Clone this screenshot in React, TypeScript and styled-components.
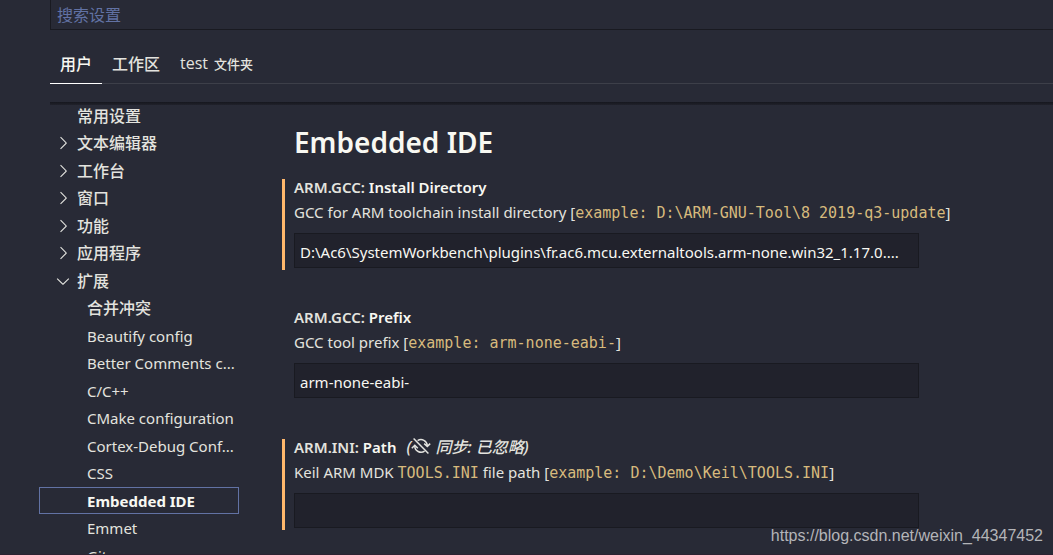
import React, { useState } from "react";
import styled, { createGlobalStyle, css } from "styled-components";
import { VscChevronDown, VscChevronRight } from "react-icons/vsc";

const colors = {
  background: "#282a36",
  inputBackground: "#21222c",
  border: "#191a21",
  divider: "#3d3f49",
  muted: "#6272a4",
  text: "#e3e3df",
  strong: "#f8f8f2",
  modified: "#ffb86c",
  code: "#d7ba7d",
};

const GlobalStyle = createGlobalStyle`
  * {
    box-sizing: border-box;
  }
  body {
    margin: 0;
    overflow: hidden;
    background: ${colors.background};
  }
  button, input {
    font: inherit;
  }
`;

const Page = styled.div`
  position: relative;
  display: flex;
  flex-direction: column;
  height: 100vh;
  overflow: hidden;
  border-bottom: 1px solid #2c2232;
  background: ${colors.background};
  color: ${colors.text};
  font-family: "Noto Sans", "Noto Sans CJK SC", sans-serif;
  font-size: 15px;
`;

const Header = styled.header`
  flex: none;
  padding-left: 50px;
`;

const SearchInput = styled.input`
  display: block;
  width: 100%;
  height: 30px;
  padding: 0 6px;
  border: solid ${colors.border};
  border-width: 0 0 1px 1px;
  outline: none;
  background: ${colors.background};
  color: ${colors.strong};
  font-size: 16px;

  &::placeholder {
    color: ${colors.muted};
    opacity: 1;
  }
`;

const Tabs = styled.div`
  display: flex;
  height: 40px;
  margin-top: 14px;
  border-bottom: 1px solid ${colors.divider};
`;

const Tab = styled.button<{ $active?: boolean }>`
  display: flex;
  align-items: center;
  gap: 6px;
  height: 40px;
  padding: 0 10px 1px;
  border: 0;
  border-bottom: 1px solid ${(p) => (p.$active ? "#ffffff" : "transparent")};
  background: none;
  color: ${(p) => (p.$active ? colors.strong : colors.text)};
  font-size: 16px;
  font-weight: 500;
  white-space: nowrap;
`;

const FolderName = styled.span`
  font-family: "Open Sans", sans-serif;
  font-weight: 400;
`;

const FolderLabel = styled.small`
  font-size: 13px;
`;

const Body = styled.div`
  display: flex;
  flex: 1;
  gap: 43px;
  min-height: 0;
  margin-top: 18px;
  padding-left: 39px;
`;

const ScrollShadow = styled.div`
  position: absolute;
  top: 102px;
  right: 0;
  left: 50px;
  height: 3px;
  background: linear-gradient(#16171e, #20212b);
`;

const Tree = styled.ul`
  display: grid;
  flex: none;
  grid-auto-rows: 27px 28px;
  width: 200px;
  margin: 0;
  padding: 0;
  list-style: none;
`;

const TreeItem = styled.button<{ $child?: boolean; $selected?: boolean }>`
  display: flex;
  align-items: center;
  width: 100%;
  height: 27px;
  padding: 0 0 0 ${(p) => (p.$child ? 47 : 13)}px;
  border: 1px solid transparent;
  background: none;
  color: inherit;
  white-space: nowrap;

  ${(p) =>
    p.$selected &&
    css`
      border-color: ${colors.muted};
      color: ${colors.strong};
      font-weight: 700;
    `}
`;

const Twistie = styled.span`
  display: flex;
  flex: none;
  width: 24px;
  font-size: 20px;
`;

const TreeLabel = styled.span<{ $cjk: boolean }>`
  ${(p) =>
    p.$cjk &&
    css`
      padding-bottom: 2px;
      font-size: 16px;
      font-weight: 500;
    `}
`;

const Settings = styled.main`
  flex: 1;
  min-width: 0;
`;

const Heading = styled.h1`
  margin: 20px 0 17px 12px;
  color: ${colors.strong};
  font-size: 28px;
  font-weight: 600;
  line-height: 40px;
`;

const SettingItem = styled.section<{ $modified?: boolean }>`
  margin-bottom: 39px;
  padding: 0 12px 2px 9px;
  border-left: 3px solid ${(p) => (p.$modified ? colors.modified : "transparent")};
`;

const SettingTitle = styled.h2`
  display: flex;
  align-items: center;
  gap: 10px;
  height: 17px;
  margin: 0;
  font-size: 15px;
  font-weight: 600;
  line-height: 17px;
  white-space: nowrap;
`;

const SettingName = styled.label`
  color: ${colors.strong};
`;

const SettingCategory = styled.span`
  color: ${colors.text};
`;

const SyncNote = styled.em`
  display: flex;
  align-items: center;
  font-size: 16px;
  font-weight: 500;
`;

const SyncSvg = styled.svg`
  width: 20px;
  height: 20px;
  margin-right: 4px;
  margin-bottom: 4px;
`;

const Description = styled.p`
  height: 24px;
  margin: 4px 0 9px;
  line-height: 24px;
  white-space: nowrap;
`;

const Code = styled.code`
  color: ${colors.code};
  font-family: "DejaVu Sans Mono", monospace;
  font-size: 15px;
  line-height: 1;
`;

const TextInput = styled.input`
  display: block;
  width: 100%;
  max-width: 625px;
  height: 35px;
  padding: 3px 5px 0;
  border: 1px solid ${colors.border};
  outline: none;
  background: ${colors.inputBackground};
  color: ${colors.strong};
  text-overflow: ellipsis;
`;

const Watermark = styled.div`
  position: absolute;
  right: 10px;
  bottom: 9px;
  color: #b4b5b9;
  font-family: "Liberation Sans", sans-serif;
  font-size: 16px;
  line-height: 18px;
`;

type Node = { label: string; state?: "open" | "closed"; child?: boolean };

const nodes: Node[] = [
  { label: "常用设置" },
  { label: "文本编辑器", state: "closed" },
  { label: "工作台", state: "closed" },
  { label: "窗口", state: "closed" },
  { label: "功能", state: "closed" },
  { label: "应用程序", state: "closed" },
  { label: "扩展", state: "open" },
  { label: "合并冲突", child: true },
  { label: "Beautify config", child: true },
  { label: "Better Comments c...", child: true },
  { label: "C/C++", child: true },
  { label: "CMake configuration", child: true },
  { label: "Cortex-Debug Conf...", child: true },
  { label: "CSS", child: true },
  { label: "Embedded IDE", child: true },
  { label: "Emmet", child: true },
  { label: "Git", child: true },
];

/* Two circling arrows crossed by a diagonal stroke. */
function SyncIgnoredIcon() {
  return (
    <SyncSvg viewBox="0 0 20 20" fill="none" stroke="currentColor" strokeWidth="1.5" aria-hidden="true">
      <path d="M6.6 4.6A6.3 6.3 0 0 1 16.3 9.6" />
      <path d="M13.2 7.6 16.3 10.4 19.2 7.6" />
      <path d="M13.6 15.2A6.3 6.3 0 0 1 3.8 10" />
      <path d="M0.8 12.2 3.8 9.2 6.8 12.2" />
      <path d="M2.6 2.4 17.4 17.6" />
    </SyncSvg>
  );
}

type SettingProps = {
  id: string;
  category: string;
  name: string;
  value: string;
  modified?: boolean;
  syncIgnored?: boolean;
  children: React.ReactNode;
};

function Setting({ id, category, name, value, modified, syncIgnored, children }: SettingProps) {
  return (
    <SettingItem $modified={modified}>
      <SettingTitle>
        <SettingName htmlFor={id}>
          <SettingCategory>{category}: </SettingCategory>
          {name}
        </SettingName>
        {syncIgnored && (
          <SyncNote>
            (<SyncIgnoredIcon />
            同步: 已忽略)
          </SyncNote>
        )}
      </SettingTitle>
      <Description>{children}</Description>
      <TextInput id={id} type="text" defaultValue={value} />
    </SettingItem>
  );
}

export default function App() {
  const [selected, setSelected] = useState("Embedded IDE");

  return (
    <Page>
      <GlobalStyle />
      <Header>
        <SearchInput type="text" placeholder="搜索设置" aria-label="搜索设置" />
        <Tabs role="tablist">
          <Tab role="tab" aria-selected $active>
            用户
          </Tab>
          <Tab role="tab">工作区</Tab>
          <Tab role="tab">
            <FolderName>test</FolderName>
            <FolderLabel>文件夹</FolderLabel>
          </Tab>
        </Tabs>
      </Header>
      <Body>
        <Tree>
          {nodes.map(({ label, state, child }) => (
            <li key={label}>
              <TreeItem $child={child} $selected={label === selected} onClick={() => setSelected(label)}>
                {!child && (
                  <Twistie>
                    {state === "closed" && <VscChevronRight />}
                    {state === "open" && <VscChevronDown />}
                  </Twistie>
                )}
                <TreeLabel $cjk={label.charCodeAt(0) > 255}>{label}</TreeLabel>
              </TreeItem>
            </li>
          ))}
        </Tree>
        <Settings>
          <Heading>Embedded IDE</Heading>
          <Setting
            id="gcc-directory"
            category="ARM.GCC"
            name="Install Directory"
            value="D:\Ac6\SystemWorkbench\plugins\fr.ac6.mcu.externaltools.arm-none.win32_1.17.0...."
            modified
          >
            GCC for ARM toolchain install directory [
            <Code>example: D:\ARM-GNU-Tool\8 2019-q3-update</Code>]
          </Setting>
          <Setting id="gcc-prefix" category="ARM.GCC" name="Prefix" value="arm-none-eabi-">
            GCC tool prefix [<Code>example: arm-none-eabi-</Code>]
          </Setting>
          <Setting id="ini-path" category="ARM.INI" name="Path" value="" modified syncIgnored>
            Keil ARM MDK <Code>TOOLS.INI</Code> file path [
            <Code>example: D:\Demo\Keil\TOOLS.INI</Code>]
          </Setting>
        </Settings>
      </Body>
      <ScrollShadow />
      <Watermark>https://blog.csdn.net/weixin_44347452</Watermark>
    </Page>
  );
}
